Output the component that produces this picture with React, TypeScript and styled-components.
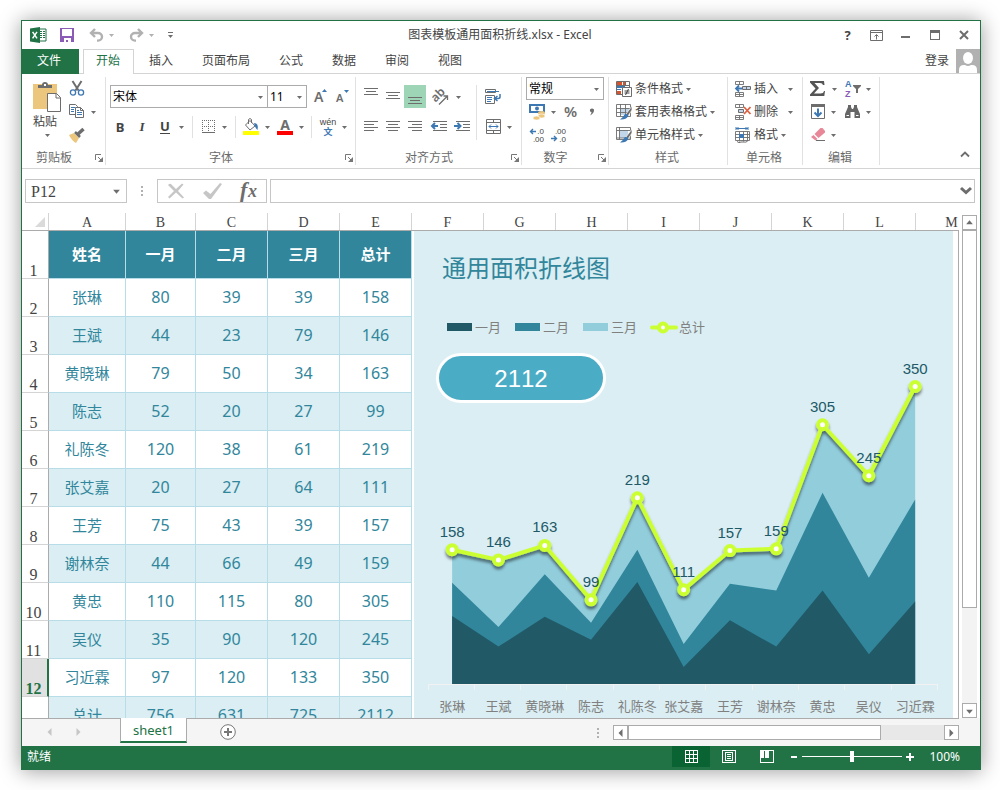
import React from 'react';
import styled, { createGlobalStyle, css } from 'styled-components';

const color = {
  green: '#217346',
  greenDark: '#0a6332',
  text: '#444444',
  muted: '#6a6a6a',
  icon: '#6d6d6d',
  line: '#d4d4d4',
  frame: '#ababab',
  blue: '#3e78b3',
  teal: '#31869b',
  tealDark: '#215967',
  tealLight: '#92cddc',
  tealPale: '#daeef3',
  cellLine: '#b7dee8',
  lime: '#ccff33',
};

const uiFont = '"Noto Sans", "Noto Sans CJK SC", sans-serif';
const cjkFont = '"Noto Sans CJK SC", sans-serif';
const gridFont = '"Liberation Serif", "Noto Sans CJK SC", serif';

const GlobalStyle = createGlobalStyle`
  *, *::before, *::after { box-sizing: border-box; }
  body { margin: 0; background: #fff; color: ${color.text}; font: 12px/16px ${uiFont}; }
  button, input, select { font: inherit; color: inherit; }
  svg { display: block; flex: none; overflow: visible; }
`;

/* ---------- window ---------- */

const Page = styled.div`
  height: 100vh;
  min-height: 400px;
  padding: 20px 19px 20px 21px;
  display: flex;
`;

const AppWindow = styled.main`
  flex: 1;
  min-width: 0;
  display: flex;
  flex-direction: column;
  border: 1px solid ${color.green};
  border-bottom: 0;
  background: #fff;
  box-shadow: 0 1px 20px rgba(0, 0, 0, 0.4);
  overflow: hidden;
`;

const plainButton = css`
  appearance: none;
  border: 0;
  padding: 0;
  background: none;
  cursor: pointer;
`;

/* ---------- title bar ---------- */

const TitleBar = styled.header`
  height: 28px;
  flex: none;
  display: grid;
  grid-template-columns: 1fr auto 1fr;
  align-items: center;
  padding-right: 2px;
`;

const QuickAccess = styled.div`
  display: flex;
  align-items: center;
  padding-left: 8px;
`;

const Title = styled.h1`
  margin: 0;
  font-size: 12px;
  line-height: 16px;
  font-weight: 400;
`;

const WindowControls = styled.div`
  display: flex;
  justify-content: flex-end;
`;

const ToolButton = styled.button<{ $w: number; $on?: boolean }>`
  ${plainButton}
  width: ${(p) => p.$w}px;
  height: 23px;
  flex: none;
  display: flex;
  align-items: center;
  justify-content: center;
  background: ${(p) => (p.$on ? '#9fd5b7' : 'transparent')};
`;

/* ---------- ribbon tabs ---------- */

const TabRow = styled.nav`
  height: 25px;
  flex: none;
  display: flex;
  box-shadow: inset 0 -1px ${color.line};
`;

const Tab = styled.button<{ $active?: boolean }>`
  ${plainButton}
  height: 25px;
  padding: 0 13px 2px 12px;
  margin-right: 2px;
  border: 1px solid transparent;
  border-bottom: 0;
  ${(p) =>
    p.$active &&
    css`
      background: #fff;
      border-color: ${color.line};
      color: ${color.green};
    `}
`;

const FileTab = styled(Tab)`
  padding: 0 17px 2px 14px;
  margin-right: 4px;
  background: ${color.green};
  border-color: ${color.green};
  color: #fff;
`;

const SignIn = styled.button`
  ${plainButton}
  margin-left: auto;
  height: 24px;
  display: flex;
  align-items: center;
  gap: 7px;
`;

/* ---------- ribbon ---------- */

const Ribbon = styled.section`
  flex: none;
  display: flex;
  padding: 3px 0;
  border-bottom: 1px solid ${color.line};
`;

const RibbonGroup = styled.div<{ $w: number }>`
  width: ${(p) => p.$w}px;
  flex: none;
  border-right: 1px solid #e1e1e1;
`;

const GroupBody = styled.div<{ $left?: number; $top?: number; $row?: boolean }>`
  height: 69px;
  display: flex;
  flex-direction: ${(p) => (p.$row ? 'row' : 'column')};
  padding-left: ${(p) => p.$left ?? 4}px;
  padding-top: ${(p) => p.$top ?? 0}px;
`;

const GroupFooter = styled.div<{ $launcher?: boolean }>`
  height: 19px;
  padding: 4px 2px 0 0;
  display: grid;
  grid-template-columns: ${(p) => (p.$launcher ? '1fr 17px' : '1fr')};
  align-items: center;
  justify-items: end;
  color: ${color.muted};
`;

const GroupName = styled.span`
  justify-self: center;
`;

const ToolRow = styled.div<{ $gapTop?: number }>`
  height: 23px;
  margin-top: ${(p) => p.$gapTop ?? 0}px;
  display: flex;
  align-items: center;
`;

const Column = styled.div<{ $left?: number }>`
  display: flex;
  flex-direction: column;
  margin-left: ${(p) => p.$left ?? 0}px;
`;

const PasteButton = styled.button`
  ${plainButton}
  display: flex;
  flex-direction: column;
  align-items: center;
  width: 28px;
  padding-top: 5px;
  gap: 2px;
`;

const PasteText = styled.span`
  display: block;
  white-space: nowrap;
  margin-right: 4px;
`;

const Divider = styled.i<{ $h: number; $x?: number }>`
  width: 1px;
  height: ${(p) => p.$h}px;
  margin: 0 ${(p) => p.$x ?? 0}px;
  background: #e1e1e1;
  flex: none;
`;

const CommandButton = styled.button`
  ${plainButton}
  height: 23px;
  display: flex;
  align-items: center;
  gap: 3px;
  white-space: nowrap;
`;

const CommandText = styled.span<{ $wide?: boolean }>`
  margin-right: ${(p) => (p.$wide ? 7 : 0)}px;
`;

const ComboFrame = styled.label<{ $w: number }>`
  width: ${(p) => p.$w}px;
  height: 23px;
  flex: none;
  display: grid;
  grid-template-columns: 1fr 14px;
  align-items: center;
  border: 1px solid ${color.frame};
  & + & { margin-left: -1px; }
  svg { grid-area: 1 / 2; justify-self: center; pointer-events: none; }
`;

const ComboSelect = styled.select`
  appearance: none;
  grid-area: 1 / 1 / 2 / 3;
  width: 100%;
  height: 21px;
  padding: 0 0 0 2px;
  border: 0;
  background: transparent;
  color: #000;
`;

const Letter = styled.span<{ $kind: 'b' | 'i' | 'u' }>`
  font-size: 13px;
  line-height: 16px;
  font-weight: 700;
  ${(p) => p.$kind === 'i' && 'font-family: "Liberation Serif", serif; font-style: italic;'}
  ${(p) => p.$kind === 'u' && 'border-bottom: 1px solid #444; line-height: 13px;'}
`;

const CollapseArea = styled.div`
  flex: 1;
  display: flex;
  align-items: flex-end;
  justify-content: flex-end;
  padding-bottom: 0;
`;

/* ---------- formula bar ---------- */

const FormulaBar = styled.section`
  flex: none;
  display: flex;
  align-items: center;
  padding: 10px 5px 10px 3px;
`;

const Field = styled.div<{ $w?: number }>`
  ${(p) => (p.$w ? `width: ${p.$w}px; flex: none;` : 'flex: 1; min-width: 0;')}
  height: 24px;
  display: flex;
  align-items: center;
  border: 1px solid #c6c6c6;
`;

const FieldInput = styled.input`
  flex: 1;
  min-width: 0;
  height: 22px;
  padding: 2px 5px 0;
  border: 0;
  outline: 0;
  background: none;
  font-family: ${gridFont};
  font-size: 16px;
`;

const Grip = styled.span<{ $w: number }>`
  width: ${(p) => p.$w}px;
  display: flex;
  justify-content: center;
  align-items: center;
`;

/* ---------- sheet ---------- */

const Workspace = styled.section`
  flex: 1;
  min-height: 0;
  display: flex;
`;

const SheetView = styled.div`
  flex: 1;
  min-width: 0;
  display: flex;
  flex-direction: column;
  overflow: hidden;
`;

const ColumnHeads = styled.div`
  flex: none;
  height: 18px;
  display: flex;
  overflow: hidden;
  border-bottom: 1px solid ${color.frame};
`;

const ColumnHead = styled.div<{ $w: number }>`
  width: ${(p) => p.$w}px;
  flex: none;
  padding-top: 2px;
  border-right: 1px solid ${color.line};
  font: 14px/16px ${gridFont};
  text-align: center;
`;

const Corner = styled(ColumnHead)`
  padding: 4px 3px 0 0;
  display: flex;
  justify-content: flex-end;
`;

const SheetBody = styled.div`
  flex: 1;
  min-height: 0;
  display: flex;
  align-items: flex-start;
  overflow: hidden;
  border-right: 1px solid ${color.frame};
`;

const DataTable = styled.table`
  flex: none;
  width: 390px;
  table-layout: fixed;
  border-collapse: separate;
  border-spacing: 0;
`;

const RowNumber = styled.th<{ $active?: boolean }>`
  padding: 0 3px 0 0;
  vertical-align: bottom;
  text-align: center;
  font: 16px/15px ${gridFont};
  border-bottom: 1px solid ${color.line};
  border-right: 1px solid ${color.frame};
  ${(p) =>
    p.$active &&
    css`
      padding-right: 2px;
      background: #e1e1e1;
      border-right: 2px solid ${color.green};
      color: ${color.green};
      font-weight: 700;
    `}
`;

const HeadCell = styled.th`
  height: 48px;
  padding: 0 0 2px;
  background: ${color.teal};
  border-right: 1px solid ${color.cellLine};
  border-bottom: 1px solid ${color.cellLine};
  color: #fff;
  font: 700 15px/20px ${cjkFont};
`;

const Cell = styled.td<{ $name?: boolean }>`
  height: 38px;
  padding: 0 0 2px;
  text-align: center;
  color: ${color.teal};
  border-right: 1px solid ${color.cellLine};
  border-bottom: 1px solid ${color.cellLine};
  font: ${(p) => (p.$name ? `15px/20px ${cjkFont}` : `16px/20px ${uiFont}`)};
`;

const DataRow = styled.tr<{ $band: boolean }>`
  ${Cell} { background: ${(p) => (p.$band ? color.tealPale : '#fff')}; }
`;

/* ---------- chart ---------- */

const Chart = styled.figure`
  flex: 1;
  min-width: 0;
  margin: 0 5px 0 2px;
  padding-top: 20px;
  background: ${color.tealPale};
`;

const ChartTitle = styled.figcaption`
  padding-left: 28px;
  color: ${color.teal};
  font: 24px/32px ${cjkFont};
`;

const Legend = styled.ul`
  margin: 34px 0 0;
  padding: 0 0 0 33px;
  list-style: none;
  display: flex;
  gap: 14px;
`;

const LegendItem = styled.li`
  display: flex;
  align-items: center;
  gap: 3px;
  color: #808080;
  font: 13px/20px ${cjkFont};
`;

const Swatch = styled.i<{ $fill: string }>`
  width: 25px;
  height: 8px;
  background: ${(p) => p.$fill};
`;

const Plot = styled.div`
  position: relative;
`;

const TotalPill = styled.output`
  position: absolute;
  left: 22px;
  top: 16px;
  width: 170px;
  height: 50px;
  border: 3px solid #fff;
  border-radius: 25px;
  background: #4bacc6;
  color: #fff;
  text-align: center;
  font: 24px/46px "Liberation Sans", sans-serif;
  font-kerning: none;
`;

/* ---------- scroll bars ---------- */

const VerticalScroll = styled.div`
  width: 21px;
  flex: none;
  display: flex;
  flex-direction: column;
  padding: 2px 3px 0;
`;

const ScrollTrack = styled.div<{ $vertical?: boolean }>`
  flex: 1;
  min-height: 0;
  display: flex;
  flex-direction: ${(p) => (p.$vertical ? 'column' : 'row')};
  background: ${(p) => (p.$vertical ? '#f3f3f3' : '#e8e8e8')};
`;

const ScrollThumb = styled.div<{ $vertical?: boolean }>`
  flex: 0 0 80%;
  background: #fff;
  border: 1px solid ${color.frame};
`;

const ScrollButton = styled.button`
  ${plainButton}
  width: 15px;
  height: 15px;
  flex: none;
  display: flex;
  align-items: center;
  justify-content: center;
  border: 1px solid ${color.frame};
  background: #fff;
`;

/* ---------- sheet tabs and status bar ---------- */

const SheetBar = styled.section`
  flex: none;
  height: 28px;
  display: flex;
  background: #f5f5f5;
  padding-right: 21px;
`;

const SheetBarMain = styled.div`
  flex: 1;
  min-width: 0;
  display: flex;
  padding-left: 13px;
  border-top: 1px solid ${color.frame};
`;

const SheetBarButton = styled.button<{ $w: number }>`
  ${plainButton}
  width: ${(p) => p.$w}px;
  height: 26px;
  display: flex;
  align-items: center;
  justify-content: center;
`;

const SheetTab = styled.button`
  ${plainButton}
  height: 25px;
  margin: -1px 0 0 13px;
  padding: 0 12px;
  background: #fff;
  border: 1px solid ${color.frame};
  border-top: 0;
  border-bottom: 2px solid ${color.green};
  color: ${color.green};
  font-size: 13px;
  line-height: 20px;
`;

const HorizontalScroll = styled.div`
  flex: 0 0 362px;
  height: 15px;
  margin: 6px 0 0 auto;
  display: flex;
`;

const StatusBar = styled.footer`
  flex: none;
  height: 24px;
  display: flex;
  align-items: center;
  padding: 0 20px 3px 5px;
  background: ${color.green};
  color: #fff;
`;

const ViewButtons = styled.div`
  display: flex;
  margin-left: auto;
`;

const ViewButton = styled.button<{ $active?: boolean }>`
  ${plainButton}
  width: 38px;
  height: 21px;
  display: flex;
  align-items: center;
  justify-content: center;
  background: ${(p) => (p.$active ? color.greenDark : 'transparent')};
`;

const ZoomBox = styled.div`
  display: flex;
  align-items: center;
  gap: 4px;
  margin: 0 15px 0 4px;
`;

const ZoomRange = styled.input`
  appearance: none;
  width: 100px;
  height: 12px;
  margin: 0;
  background: linear-gradient(#fff, #fff) center / 100% 1px no-repeat;
  &::-webkit-slider-thumb {
    appearance: none;
    width: 4px;
    height: 11px;
    background: #fff;
  }
`;

/* ---------- icons ---------- */

type Direction = 'down' | 'up' | 'left' | 'right';

const arrowPoints: Record<Direction, string> = {
  down: '0,2 5,2 2.5,5',
  up: '0,4 5,4 2.5,1',
  left: '4,0 4,6 1,3',
  right: '1,0 1,6 4,3',
};

const Arrow = ({ dir = 'down', fill = color.icon, size = 5 }: { dir?: Direction; fill?: string; size?: number }) => (
  <svg width={size} height={size + 1} viewBox="0 0 5 6" aria-hidden="true">
    <polygon points={arrowPoints[dir]} fill={fill} />
  </svg>
);

type IconProps = { w?: number; h?: number; crisp?: boolean; children: React.ReactNode };

const Icon = ({ w = 16, h = 16, crisp, children }: IconProps) => (
  <svg
    width={w}
    height={h}
    viewBox={`0 0 ${w} ${h}`}
    fill="none"
    shapeRendering={crisp ? 'crispEdges' : undefined}
    aria-hidden="true"
  >
    {children}
  </svg>
);

const ExcelLogo = () => (
  <Icon>
    <path d="M8 2h8v12H8z" fill="#fff" stroke={color.green} />
    <path d="M10 4h2v1h-2zm3 0h2v1h-2zm-3 2h2v1h-2zm3 0h2v1h-2zm-3 2h2v1h-2zm3 0h2v1h-2zm-3 2h2v1h-2zm3 0h2v1h-2z" fill={color.green} />
    <path d="M0 1.5 10 0v16L0 14.5z" fill={color.green} />
    <path d="M2.6 4.8 7 11.4M7 4.8 2.6 11.4" stroke="#fff" strokeWidth="1.5" />
  </Icon>
);

const SaveIcon = () => (
  <Icon w={14} h={14} crisp>
    <path d="M0 0h14v14H0z" fill="#8b5bb5" />
    <path d="M2 1h10v7H2zM4 10h7v4H8v-2H6v2H4z" fill="#fff" />
  </Icon>
);

const UndoIcon = () => (
  <Icon w={15} h={14}>
    <path d="M6 1 2 5l4 4M2.5 5H9a4 3.8 0 0 1 0 7.6H8" stroke="#b1b1b1" strokeWidth="2.4" />
  </Icon>
);

const RedoIcon = () => (
  <Icon w={15} h={14}>
    <path d="m9 1 4 4-4 4M12.500 5H6a4 3.800 0 0 0 0 7.600h1" stroke="#b1b1b1" strokeWidth="2.4" />
  </Icon>
);

const CustomizeIcon = () => (
  <Icon w={5} h={6}>
    <path d="M0 .5h5" stroke={color.icon} />
    <path d="M0 3h5L2.500 6z" fill={color.icon} />
  </Icon>
);

const RibbonDisplayIcon = () => (
  <Icon w={13} h={11}>
    <path d="M.5.5h12v10H.5zM1 2.500h11" stroke={color.icon} />
    <path d="M6.500 9.500V5M4.500 6.500l2-2 2 2" stroke={color.icon} />
  </Icon>
);

const MaximizeIcon = () => (
  <Icon w={10} h={10} crisp>
    <path d="M0 0h10v10H0z" fill={color.icon} />
    <path d="M1 3h8v6H1z" fill="#fff" />
  </Icon>
);

const CloseIcon = () => (
  <Icon w={10} h={10}>
    <path d="m1 1 8 8M9 1 1 9" stroke={color.icon} strokeWidth="2" />
  </Icon>
);

const AvatarIcon = () => (
  <Icon w={24} h={24}>
    <path d="M0 0h24v24H0z" fill="#b1b1b1" />
    <ellipse cx="12" cy="9" rx="5" ry="6" fill="#fff" />
    <path d="M3 24v-3q0-5 5-5h1q3 2 6 0h1q5 0 5 5v3z" fill="#fff" />
  </Icon>
);

const PasteIcon = () => (
  <Icon w={28} h={30}>
    <path d="M0 2h24v25H0z" fill="#ecc67d" />
    <path d="M5 6V3h4q0-3 3-3t3 3h4v3z" fill={color.icon} />
    <path d="M11 2h2v2h-2z" fill="#fff" />
    <path d="M14.500 11.500h9l4 4v14h-13z" fill="#fff" stroke={color.icon} />
    <path d="M23 11.500v4.500h4.500" stroke={color.icon} />
  </Icon>
);

const CutIcon = () => (
  <Icon>
    <path d="m3.500 0 6 9.500M12.500 0l-6 9.500" stroke={color.icon} strokeWidth="2" />
    <circle cx="4" cy="11.500" r="2.600" stroke={color.blue} strokeWidth="1.300" />
    <circle cx="12" cy="11.500" r="2.600" stroke={color.blue} strokeWidth="1.300" />
  </Icon>
);

const CopyIcon = () => (
  <Icon>
    <path d="M.5.5h6l2 2v8h-8z" fill="#fff" stroke={color.icon} />
    <path d="M2 3.500h4M2 5.500h3M2 7.500h3" stroke={color.blue} />
    <path d="M6.500 3.500h5l3 3v7h-8z" fill="#fff" stroke={color.icon} />
    <path d="M11.500 3.500v3h3" stroke={color.icon} />
    <path d="M8 8.500h5M8 10.500h5M8 6.500h2" stroke={color.blue} />
  </Icon>
);

const BrushIcon = () => (
  <Icon>
    <path d="M0 8 5 6l5 5-3 5q-4-2-7-8z" fill="#ecc67d" />
    <path d="m6 5 5 5" stroke={color.icon} strokeWidth="2.500" />
    <path d="m9 7 5.500-5" stroke={color.icon} strokeWidth="3.500" />
  </Icon>
);

const LauncherIcon = () => (
  <Icon w={8} h={8}>
    <path d="M.5 6V.5H6" stroke="#777" />
    <path d="m3 3 3 3" stroke="#777" />
    <path d="M8 3v5H3z" fill="#777" />
  </Icon>
);

const GrowFontIcon = ({ shrink }: { shrink?: boolean }) => (
  <Icon w={15} h={17}>
    <text x="1" y="14" fontFamily="Noto Sans, sans-serif" fontWeight="600" fontSize={shrink ? 11 : 14} fill={color.icon}>A</text>
    <path d={shrink ? 'M9 2h5l-2.500 3z' : 'M9 4h5L11.500 1z'} fill={color.blue} />
  </Icon>
);

const BorderIcon = () => (
  <Icon w={13} h={13} crisp>
    <path d="M.5 0v12M6.500 0v12M12.500 0v12M0 .5h13M0 6.500h13" stroke={color.icon} strokeDasharray="1 1" />
    <path d="M0 12.500h13" stroke={color.icon} />
  </Icon>
);

const FillIcon = () => (
  <Icon w={16} h={17}>
    <path d="M7 2.500 12 8l-5 4-4.500-5z" fill="#fff" stroke={color.icon} />
    <path d="M5.500 6V1.500q1.500-2 3 0V5" stroke={color.icon} />
    <path d="M11 5q5 0 3.500 7Q12 10 11 5z" fill={color.blue} />
    <path d="M0 13h16v4H0z" fill="#ffff00" />
  </Icon>
);

const FontColorIcon = () => (
  <Icon w={16} h={17}>
    <text x="8" y="12" textAnchor="middle" fontFamily="Noto Sans, sans-serif" fontWeight="700" fontSize="14" fill={color.icon}>A</text>
    <path d="M0 13h16v4H0z" fill="#ff0000" />
  </Icon>
);

const PhoneticIcon = () => (
  <Icon w={18} h={18}>
    <text x="9" y="7" textAnchor="middle" fontFamily="Liberation Sans, sans-serif" fontSize="9" fill={color.text}>wén</text>
    <text x="9" y="17" textAnchor="middle" fontFamily="Noto Sans CJK SC, sans-serif" fontWeight="700" fontSize="9" fill={color.blue}>文</text>
  </Icon>
);

/* Four text lines; a short line is shifted towards the chosen side. */
const AlignIcon = ({ side }: { side: 'left' | 'center' | 'right' }) => {
  const start = { left: 0, center: 2, right: 4 }[side];
  return (
    <Icon w={14} h={11} crisp>
      <path d={`M0 .5h14M${start} 3.500h10M0 6.500h14M${start} 9.500h10`} stroke={color.icon} />
    </Icon>
  );
};

const VAlignIcon = ({ shift }: { shift: number }) => (
  <Icon w={14} h={23} crisp>
    <path d={`M0 ${shift + 0.5}h14M2 ${shift + 3.5}h10M0 ${shift + 6.5}h14`} stroke={color.icon} />
  </Icon>
);

const OrientationIcon = () => (
  <Icon w={17} h={16}>
    <text x="0" y="11" transform="rotate(-45 5 8)" fontFamily="Noto Sans, sans-serif" fontWeight="600" fontSize="12" fill={color.icon}>ab</text>
    <path d="M7 15.500 15.500 7M11.500 7h4v4" stroke={color.icon} strokeWidth="1.300" />
  </Icon>
);

const IndentIcon = ({ more }: { more?: boolean }) => (
  <Icon w={17} h={11}>
    <path d="M2 .5h14M9 3.500h7M9 6.500h7M2 9.500h14" stroke={color.icon} shapeRendering="crispEdges" />
    {more ? (
      <path d="M0 5h5M3.500 2 6.500 5l-3 3" stroke={color.blue} strokeWidth="2" />
    ) : (
      <path d="M7 5H2M4 2 1 5l3 3" stroke={color.blue} strokeWidth="2" />
    )}
  </Icon>
);

const WrapIcon = () => (
  <Icon>
    <path d="M.5.5h10v3H.5zM.5 6.500h9v8H.5z" stroke={color.icon} />
    <path d="M2 2.500h12M2 8.500h5M2 10.500h5M2 12.500h4" stroke={color.blue} />
    <path d="M15 5v3q0 1.500-2 1.500h-3M12.500 7l-3 2.500 3 2.500" stroke={color.blue} strokeWidth="1.500" />
  </Icon>
);

const MergeIcon = () => (
  <Icon w={15} h={15}>
    <path d="M.5.5h14v14H.5zM.5 3.500h14M.5 11.500h14M7.500 0v3.500M7.500 11.500V15" stroke={color.icon} />
    <path d="M3 7.500h9M5 5.500l-2 2 2 2M10 5.500l2 2-2 2" stroke={color.blue} />
  </Icon>
);

const CurrencyIcon = () => (
  <Icon>
    <path d="M1 1h14v7H1z" fill="#fff" stroke={color.blue} strokeWidth="2" />
    <circle cx="8" cy="4.500" r="2" fill={color.blue} />
    <ellipse cx="12.500" cy="9" rx="3.500" ry="2" fill="#ecc67d" />
    <ellipse cx="12.500" cy="12" rx="3.500" ry="2" fill="#ecc67d" stroke="#fff" strokeWidth=".6" />
    <ellipse cx="7.500" cy="14" rx="3.500" ry="2" fill="#ecc67d" stroke="#fff" strokeWidth=".6" />
  </Icon>
);

const PercentIcon = () => (
  <Icon w={14} h={14}>
    <text x="0" y="12" fontFamily="Noto Sans, sans-serif" fontWeight="600" fontSize="15" fill={color.icon}>%</text>
  </Icon>
);

const CommaIcon = () => (
  <Icon w={6} h={8}>
    <path d="M1 1.500Q3-.5 5 1.500q.5 3.500-4 6 1.500-2 1.500-3.500Q.5 4 1 1.500z" fill={color.icon} />
  </Icon>
);

const DecimalIcon = ({ less }: { less?: boolean }) => (
  <Icon w={16} h={16}>
    <text x="15" y="7" textAnchor="end" fontFamily="Liberation Sans, sans-serif" fontSize="8" fill={color.text}>{less ? '.00' : '.0'}</text>
    <text x="15" y="15" textAnchor="end" fontFamily="Liberation Sans, sans-serif" fontSize="8" fill={color.text}>{less ? '.0' : '.00'}</text>
    {less ? (
      <path d="M0 11.500h5M3 9l2.500 2.500L3 14" stroke={color.blue} strokeWidth="1.400" />
    ) : (
      <path d="M7 4.500H1.500M4 2 1.500 4.500 4 7" stroke={color.blue} strokeWidth="1.400" />
    )}
  </Icon>
);

const ConditionalIcon = () => (
  <Icon>
    <path d="M.5.5h13v13H.5z" fill="#fff" stroke={color.icon} />
    <path d="M1 1h5v3H1zM1 10h4v3H1z" fill="#d6532d" />
    <path d="M1 5h8v2H1zM1 8h4v1H1z" fill={color.blue} />
    <path d="M7 1h2v3H7z" fill="#d6532d" />
    <path d="M9.500 1v4M0 4.500h13" stroke={color.icon} />
    <path d="M6.500 6.500h9v9h-9z" fill="#fff" stroke={color.icon} />
    <path d="M8.500 10h5M8.500 12h5M12.500 8l-3 6" stroke={color.text} />
  </Icon>
);

const TableStyleIcon = ({ solid }: { solid?: boolean }) => (
  <Icon>
    {solid ? <path d="M4 3h8v8H4z" fill="#c3d5e8" /> : <path d="M4 4h9v7H4z" fill="#c3d5e8" />}
    <path d={solid ? 'M.5.5h14v12H.5zM.5 3.500h14M3.500 0v12.500M.5 11h14' : 'M.5.5h14v12H.5zM.5 4.500h14M.5 8.500h14M4.500 0v12.500M9.500 0v12.500'} stroke={color.icon} strokeWidth=".9" />
    <path d="M16 2 10 10l2 2 4-6z" fill={color.icon} stroke="#fff" strokeWidth=".7" />
    <path d="M9 10q4-.5 3 2.500-2 3.500-8 3 3-2 5-5.500z" fill={color.blue} />
  </Icon>
);

const CellsIcon = ({ kind }: { kind: 'insert' | 'delete' }) => (
  <Icon>
    <path d="M.5.5h8v3h-8zM4.500.5v3M.5 11.500h8v4h-8zM4.500 11.500v4M.5 13.500h8" stroke={color.icon} strokeWidth=".9" />
    {kind === 'insert' ? (
      <>
        <path d="M7.500 5.500h8v3h-8zM11.500 5.500v3" fill="#c3d5e8" stroke={color.icon} />
        <path d="M7 7.500H1.500M4 4.500l-3 3 3 3" stroke={color.blue} strokeWidth="1.800" />
      </>
    ) : (
      <>
        <path d="M3.500 5.500h5v3h-5z" fill="#c3d5e8" stroke={color.icon} />
        <path d="m9 3 6.500 7M15.500 3 9 10" stroke="#dc6141" strokeWidth="1.800" />
      </>
    )}
  </Icon>
);

const FormatIcon = () => (
  <Icon>
    <path d="M1 1.500h12M1 0v3M13 0v3M3 0v3M11 0v3" stroke={color.blue} />
    <path d="M.5 4.500h14v9H.5zM.5 7.500h14M.5 10.500h14M4.500 4.500v10M8.500 4.500v10M12.500 4.500v10" stroke={color.icon} strokeWidth=".9" />
    <path d="M4 7h5v4H4z" fill={color.blue} />
    <path d="M2 14.500q2 2 4 .5h3q2 .5 3-.5" stroke={color.icon} />
  </Icon>
);

const SumIcon = () => (
  <Icon w={16} h={15}>
    <path d="M0 0h14l.5 4H13q-.5-2-3-2H4.500L9 7l-5 5.500h6.500q3 0 3.500-2.500h1l-.7 5H0v-1.500L5.500 7.500 0 1.500z" fill="#555" />
  </Icon>
);

const SortFilterIcon = () => (
  <Icon w={16} h={17}>
    <text x="0" y="7" fontFamily="Liberation Sans, sans-serif" fontWeight="700" fontSize="9" fill={color.blue}>A</text>
    <text x="0" y="17" fontFamily="Liberation Sans, sans-serif" fontWeight="700" fontSize="9" fill="#8b5bb5">Z</text>
    <path d="M8 5h8v1l-3 3v4h-2V9L8 6z" fill={color.icon} />
  </Icon>
);

const FillDownIcon = () => (
  <Icon w={14} h={15}>
    <path d="M.5.5h13v14H.5z" fill="#fff" stroke={color.icon} />
    <path d="M0 0h14v3H0z" fill={color.icon} />
    <path d="M7 4.500V12M3.500 8.500 7 12l3.500-3.500" stroke={color.blue} strokeWidth="2" />
  </Icon>
);

const FindIcon = () => (
  <Icon w={15} h={13}>
    <path d="M3 0h3v2l1 2h1l1-2V0h3v2l3 7v4h-5.500V7h-4v6H0V9l3-7z" fill="#666" />
    <path d="M1.500 10.500h2.500M11 10.500h2.500" stroke="#fff" />
  </Icon>
);

const ClearIcon = () => (
  <Icon w={15} h={13}>
    <path d="m3.500 6 6-6h2L14 3v1.500L7.500 10z" fill="#e88798" />
    <path d="m2.500 7 4 4-2 1.500L0 9z" fill="#e88798" />
    <path d="M5 12.500h9" stroke={color.icon} />
  </Icon>
);

const CollapseIcon = () => (
  <Icon w={10} h={6}>
    <path d="m1 5.500 4-4 4 4" stroke={color.icon} strokeWidth="1.800" />
  </Icon>
);

const DotsIcon = () => (
  <Icon w={2} h={10} crisp>
    <path d="M0 0h2v2H0zM0 4h2v2H0zM0 8h2v2H0z" fill="#b1b1b1" />
  </Icon>
);

const CancelIcon = () => (
  <Icon w={18} h={16}>
    <path d="M1 2q2-2 3-1l5 5 6-5.500 1.500 1L11 8l6 6.500-1.500 1L9 9.500l-6.500 6L1 14l6-6z" fill="#c6c6c6" />
  </Icon>
);

const EnterIcon = () => (
  <Icon w={19} h={16}>
    <path d="m0 10 3-2.500L7.500 11 17 0l2 1L8 16H6z" fill="#c6c6c6" />
  </Icon>
);

const FxIcon = () => (
  <Icon w={22} h={22}>
    <text x="3" y="17" fontFamily="Liberation Serif, serif" fontStyle="italic" fontWeight="700" fontSize="22" fill={color.icon}>f</text>
    <text x="11" y="17" fontFamily="Liberation Serif, serif" fontStyle="italic" fontWeight="700" fontSize="18" fill={color.icon}>x</text>
  </Icon>
);

const ExpandIcon = () => (
  <Icon w={12} h={8}>
    <path d="m1 1 5 4.500L11 1" stroke={color.icon} strokeWidth="3" />
  </Icon>
);

const SelectAllIcon = () => (
  <Icon w={10} h={10}>
    <path d="M10 0v10H0z" fill="#dadada" />
  </Icon>
);

const AddSheetIcon = () => (
  <Icon w={16} h={16}>
    <circle cx="8" cy="8" r="7.300" fill="#fff" stroke="#777" />
    <path d="M8 4v8M4 8h8" stroke="#777" strokeWidth="2" />
  </Icon>
);

const NormalViewIcon = () => (
  <Icon w={13} h={13} crisp>
    <path d="M.5.5h12v12H.5zM4.500 0v13M8.500 0v13M0 4.500h13M0 8.500h13" stroke="#fff" />
  </Icon>
);

const LayoutViewIcon = () => (
  <Icon w={14} h={13} crisp>
    <path d="M.5.5h13v12H.5zM3.500 2.500h7v8h-7zM5 4.500h4M5 6.500h4M5 8.500h4" stroke="#fff" />
  </Icon>
);

const BreakViewIcon = () => (
  <Icon w={14} h={13} crisp>
    <path d="M.5.5h13v12H.5z" stroke="#fff" />
    <path d="M1 1h3v7H1zM5 1h4v7H5z" fill="#fff" />
  </Icon>
);

const SignIcon = ({ plus }: { plus?: boolean }) => (
  <Icon w={8} h={8} crisp>
    <path d={plus ? 'M0 3h8v2H0zM3 0h2v8H3z' : 'M1 3h6v2H1z'} fill="#fff" />
  </Icon>
);

/* ---------- data ---------- */

const headings = ['姓名', '一月', '二月', '三月', '总计'];

const people: [string, number, number, number][] = [
  ['张琳', 80, 39, 39],
  ['王斌', 44, 23, 79],
  ['黄晓琳', 79, 50, 34],
  ['陈志', 52, 20, 27],
  ['礼陈冬', 120, 38, 61],
  ['张艾嘉', 20, 27, 64],
  ['王芳', 75, 43, 39],
  ['谢林奈', 44, 66, 49],
  ['黄忠', 110, 115, 80],
  ['吴仪', 35, 90, 120],
  ['习近霖', 97, 120, 133],
];

const tableRows: (string | number)[][] = [
  ...people.map(([name, a, b, c]) => [name, a, b, c, a + b + c]),
  ['总计', 756, 631, 725, 2112],
];

const columns = [
  { name: 'A', w: 77 },
  { name: 'B', w: 70 },
  ...'CDEFGHIJKLM'.split('').map((name) => ({ name, w: 72 })),
];

const tabs = ['开始', '插入', '页面布局', '公式', '数据', '审阅', '视图'];

/* ---------- parts ---------- */

const Group = ({ name, w, launcher, children }: { name: string; w: number; launcher?: boolean; children: React.ReactNode }) => (
  <RibbonGroup $w={w}>
    {children}
    <GroupFooter $launcher={launcher}>
      <GroupName>{name}</GroupName>
      {launcher && <LauncherIcon />}
    </GroupFooter>
  </RibbonGroup>
);

const Combo = ({ label, value, w }: { label: string; value: string; w: number }) => (
  <ComboFrame $w={w}>
    <ComboSelect aria-label={label} defaultValue={value}>
      <option>{value}</option>
    </ComboSelect>
    <Arrow />
  </ComboFrame>
);

const Tool = ({ label, w, on, children }: { label: string; w: number; on?: boolean; children: React.ReactNode }) => (
  <ToolButton type="button" aria-label={label} title={label} $w={w} $on={on}>
    {children}
  </ToolButton>
);

const More = ({ w = 9 }: { w?: number }) => (
  <Tool label="更多" w={w}>
    <Arrow />
  </Tool>
);

const Command = ({ icon, text, wide }: { icon: React.ReactNode; text: string; wide?: boolean }) => (
  <CommandButton type="button">
    {icon}
    <CommandText $wide={wide}>{text}</CommandText>
    <Arrow />
  </CommandButton>
);

const plot = { left: 15, step: 46.3, base: 347, scale: 0.85, width: 539, height: 391 };

const AreaLineChart = () => {
  const x = (i: number) => plot.left + plot.step * (i + 0.5);
  const y = (v: number) => plot.base - v * plot.scale;
  const line = (values: number[]) => values.map((v, i) => `${x(i)},${y(v)}`).join(' ');
  const area = (values: number[]) => `${x(0)},${plot.base} ${line(values)} ${x(values.length - 1)},${plot.base}`;
  const first = people.map((p) => p[1]);
  const second = people.map((p) => p[1] + p[2]);
  const total = people.map((p) => p[1] + p[2] + p[3]);
  const end = plot.left + plot.step * people.length;

  return (
    <svg width={plot.width} height={plot.height} viewBox={`0 0 ${plot.width} ${plot.height}`} role="img" aria-label="通用面积折线图">
      <defs>
        <filter id="lineShadow" x="-10%" y="-10%" width="120%" height="120%">
          <feDropShadow dx="0" dy="3" stdDeviation="1.5" floodOpacity="0.5" />
        </filter>
      </defs>
      <polygon points={area(total)} fill={color.tealLight} />
      <polygon points={area(second)} fill={color.teal} />
      <polygon points={area(first)} fill={color.tealDark} />
      <path
        d={`M${plot.left} ${plot.base + 0.5}H${end}` + Array.from({ length: people.length + 1 }, (_, i) => `M${Math.floor(plot.left + i * plot.step) - 0.5} ${plot.base}v6`).join('')}
        stroke="#f2f2f2"
      />
      <g filter="url(#lineShadow)">
        <polyline points={line(total)} fill="none" stroke={color.lime} strokeWidth="4" strokeLinejoin="round" />
        {total.map((v, i) => (
          <circle key={i} cx={x(i)} cy={y(v)} r="4.5" fill="#fff" stroke={color.lime} strokeWidth="4" />
        ))}
      </g>
      {total.map((v, i) => (
        <text key={i} x={x(i)} y={y(v) - 13} textAnchor="middle" fontFamily="Liberation Sans, sans-serif" fontSize="15" fill={color.tealDark}>
          {v}
        </text>
      ))}
      {people.map(([name], i) => (
        <text key={name} x={x(i)} y={plot.base + 27} textAnchor="middle" fontFamily="Noto Sans CJK SC, sans-serif" fontSize="13" fill="#808080">
          {name}
        </text>
      ))}
    </svg>
  );
};

const RibbonPanel = () => (
  <Ribbon>
    <Group name="剪贴板" w={84} launcher>
      <GroupBody $row $left={11}>
        <PasteButton type="button">
          <PasteIcon />
          <PasteText>粘贴</PasteText>
          <Arrow />
        </PasteButton>
        <Column $left={8}>
          <ToolRow><Tool label="剪切" w={16}><CutIcon /></Tool></ToolRow>
          <ToolRow><Tool label="复制" w={16}><CopyIcon /></Tool><More w={16} /></ToolRow>
          <ToolRow><Tool label="格式刷" w={16}><BrushIcon /></Tool></ToolRow>
        </Column>
      </GroupBody>
    </Group>

    <Group name="字体" w={250} launcher>
      <GroupBody $top={8}>
        <ToolRow>
          <Combo label="字体" value="宋体" w={158} />
          <Combo label="字号" value="11" w={40} />
          <Tool label="增大字号" w={26}><GrowFontIcon /></Tool>
          <Tool label="减小字号" w={18}><GrowFontIcon shrink /></Tool>
        </ToolRow>
        <ToolRow $gapTop={7}>
          <Tool label="加粗" w={20}><Letter $kind="b">B</Letter></Tool>
          <Tool label="倾斜" w={24}><Letter $kind="i">I</Letter></Tool>
          <Tool label="下划线" w={22}><Letter $kind="u">U</Letter></Tool>
          <More w={11} />
          <Divider $h={22} $x={5} />
          <Tool label="边框" w={20}><BorderIcon /></Tool>
          <More w={12} />
          <Divider $h={22} $x={5} />
          <Tool label="填充颜色" w={20}><FillIcon /></Tool>
          <More w={12} />
          <Tool label="字体颜色" w={24}><FontColorIcon /></Tool>
          <More w={9} />
          <Divider $h={22} $x={5} />
          <Tool label="拼音指南" w={22}><PhoneticIcon /></Tool>
          <More w={10} />
        </ToolRow>
      </GroupBody>
    </Group>

    <Group name="对齐方式" w={166} launcher>
      <GroupBody $row $top={8}>
        <Column>
          <ToolRow>
            <Tool label="顶端对齐" w={22}><VAlignIcon shift={3} /></Tool>
            <Tool label="垂直居中" w={22}><VAlignIcon shift={7} /></Tool>
            <Tool label="底端对齐" w={22} on><VAlignIcon shift={12} /></Tool>
            <Tool label="方向" w={28}><OrientationIcon /></Tool>
            <More w={8} />
          </ToolRow>
          <ToolRow $gapTop={7}>
            <Tool label="左对齐" w={22}><AlignIcon side="left" /></Tool>
            <Tool label="居中" w={22}><AlignIcon side="center" /></Tool>
            <Tool label="右对齐" w={22}><AlignIcon side="right" /></Tool>
            <Tool label="减少缩进" w={26}><IndentIcon /></Tool>
            <Tool label="增加缩进" w={20}><IndentIcon more /></Tool>
          </ToolRow>
        </Column>
        <Divider $h={55} $x={4} />
        <Column $left={4}>
          <ToolRow><Tool label="自动换行" w={16}><WrapIcon /></Tool></ToolRow>
          <ToolRow $gapTop={7}><Tool label="合并后居中" w={16}><MergeIcon /></Tool><More w={16} /></ToolRow>
        </Column>
      </GroupBody>
    </Group>

    <Group name="数字" w={87} launcher>
      <GroupBody>
        <ToolRow><Combo label="数字格式" value="常规" w={78} /></ToolRow>
        <ToolRow>
          <Tool label="会计数字格式" w={22}><CurrencyIcon /></Tool>
          <More w={10} />
          <Tool label="百分比样式" w={26}><PercentIcon /></Tool>
          <Tool label="千位分隔样式" w={16}><CommaIcon /></Tool>
        </ToolRow>
        <ToolRow>
          <Tool label="增加小数位数" w={21}><DecimalIcon /></Tool>
          <Tool label="减少小数位数" w={24}><DecimalIcon less /></Tool>
        </ToolRow>
      </GroupBody>
    </Group>

    <Group name="样式" w={119}>
      <GroupBody $left={7}>
        <Command icon={<ConditionalIcon />} text="条件格式" />
        <Command icon={<TableStyleIcon />} text="套用表格格式" />
        <Command icon={<TableStyleIcon solid />} text="单元格样式" />
      </GroupBody>
    </Group>

    <Group name="单元格" w={75}>
      <GroupBody $left={7}>
        <Command icon={<CellsIcon kind="insert" />} text="插入" wide />
        <Command icon={<CellsIcon kind="delete" />} text="删除" wide />
        <Command icon={<FormatIcon />} text="格式" />
      </GroupBody>
    </Group>

    <Group name="编辑" w={77}>
      <GroupBody $left={7}>
        <ToolRow>
          <Tool label="自动求和" w={16}><SumIcon /></Tool>
          <More w={16} />
          <Tool label="排序和筛选" w={22}><SortFilterIcon /></Tool>
          <More w={8} />
        </ToolRow>
        <ToolRow>
          <Tool label="填充" w={16}><FillDownIcon /></Tool>
          <More w={14} />
          <Tool label="查找和选择" w={24}><FindIcon /></Tool>
          <More w={8} />
        </ToolRow>
        <ToolRow>
          <Tool label="清除" w={16}><ClearIcon /></Tool>
          <More w={14} />
        </ToolRow>
      </GroupBody>
    </Group>

    <CollapseArea>
      <Tool label="折叠功能区" w={30}><CollapseIcon /></Tool>
    </CollapseArea>
  </Ribbon>
);

export default function App() {
  return (
    <Page>
      <GlobalStyle />
      <AppWindow>
        <TitleBar>
          <QuickAccess>
            <ExcelLogo />
            <Tool label="保存" w={42}><SaveIcon /></Tool>
            <Tool label="撤消" w={16}><UndoIcon /></Tool>
            <Tool label="撤消列表" w={14}><Arrow fill="#b1b1b1" /></Tool>
            <Grip $w={9} />
            <Tool label="恢复" w={18}><RedoIcon /></Tool>
            <Tool label="恢复列表" w={12}><Arrow fill="#b1b1b1" /></Tool>
            <Tool label="自定义快速访问工具栏" w={26}><CustomizeIcon /></Tool>
          </QuickAccess>
          <Title>图表模板通用面积折线.xlsx - Excel</Title>
          <WindowControls>
            <Tool label="帮助" w={29}><Letter $kind="b">?</Letter></Tool>
            <Tool label="功能区显示选项" w={29}><RibbonDisplayIcon /></Tool>
            <Tool label="最小化" w={29}>
              <Icon w={9} h={6} crisp><path d="M0 4h9v2H0z" fill={color.icon} /></Icon>
            </Tool>
            <Tool label="最大化" w={29}><MaximizeIcon /></Tool>
            <Tool label="关闭" w={29}><CloseIcon /></Tool>
          </WindowControls>
        </TitleBar>

        <TabRow>
          <FileTab type="button">文件</FileTab>
          {tabs.map((name, i) => (
            <Tab key={name} type="button" $active={i === 0}>{name}</Tab>
          ))}
          <SignIn type="button">
            登录
            <AvatarIcon />
          </SignIn>
        </TabRow>

        <RibbonPanel />

        <FormulaBar>
          <Field $w={102}>
            <FieldInput aria-label="名称框" defaultValue="P12" />
            <Tool label="名称列表" w={20}><Arrow size={7} /></Tool>
          </Field>
          <Grip $w={30}><DotsIcon /></Grip>
          <Field $w={110}>
            <Tool label="取消" w={36}><CancelIcon /></Tool>
            <Tool label="输入" w={36}><EnterIcon /></Tool>
            <Tool label="插入函数" w={36}><FxIcon /></Tool>
          </Field>
          <Grip $w={3} />
          <Field>
            <FieldInput aria-label="编辑栏" defaultValue="" />
            <Tool label="展开编辑栏" w={16}><ExpandIcon /></Tool>
          </Field>
        </FormulaBar>

        <Workspace>
          <SheetView>
            <ColumnHeads>
              <Corner $w={27}><SelectAllIcon /></Corner>
              {columns.map((c) => (
                <ColumnHead key={c.name} $w={c.w}>{c.name}</ColumnHead>
              ))}
            </ColumnHeads>
            <SheetBody>
              <DataTable>
                <colgroup>
                  <col width={27} />
                  {columns.slice(0, 5).map((c) => (
                    <col key={c.name} width={c.w} />
                  ))}
                </colgroup>
                <thead>
                  <tr>
                    <RowNumber scope="row">1</RowNumber>
                    {headings.map((h) => (
                      <HeadCell key={h} scope="col">{h}</HeadCell>
                    ))}
                  </tr>
                </thead>
                <tbody>
                  {tableRows.map((row, r) => (
                    <DataRow key={row[0]} $band={r % 2 === 1}>
                      <RowNumber scope="row" $active={r === 10}>{r + 2}</RowNumber>
                      {row.map((value, c) => (
                        <Cell key={c} $name={c === 0}>{value}</Cell>
                      ))}
                    </DataRow>
                  ))}
                </tbody>
              </DataTable>
              <Chart>
                <ChartTitle>通用面积折线图</ChartTitle>
                <Legend>
                  <LegendItem><Swatch $fill={color.tealDark} />一月</LegendItem>
                  <LegendItem><Swatch $fill={color.teal} />二月</LegendItem>
                  <LegendItem><Swatch $fill={color.tealLight} />三月</LegendItem>
                  <LegendItem>
                    <Icon w={25} h={13}>
                      <path d="M1 6.500h24" stroke={color.lime} strokeWidth="4" strokeLinecap="round" />
                      <circle cx="12" cy="6.500" r="4" fill="#fff" stroke={color.lime} strokeWidth="4" />
                    </Icon>
                    总计
                  </LegendItem>
                </Legend>
                <Plot>
                  <AreaLineChart />
                  <TotalPill>2112</TotalPill>
                </Plot>
              </Chart>
            </SheetBody>
          </SheetView>
          <VerticalScroll>
            <ScrollButton type="button" aria-label="向上滚动"><Arrow dir="up" size={7} /></ScrollButton>
            <ScrollTrack $vertical><ScrollThumb $vertical /></ScrollTrack>
            <ScrollButton type="button" aria-label="向下滚动"><Arrow size={7} /></ScrollButton>
          </VerticalScroll>
        </Workspace>

        <SheetBar>
          <SheetBarMain>
            <SheetBarButton type="button" aria-label="上一张工作表" $w={28}><Arrow dir="left" fill="#c6c6c6" size={7} /></SheetBarButton>
            <SheetBarButton type="button" aria-label="下一张工作表" $w={30}><Arrow dir="right" fill="#c6c6c6" size={7} /></SheetBarButton>
            <Grip $w={14} />
            <SheetTab type="button">sheet1</SheetTab>
            <SheetBarButton type="button" aria-label="新工作表" $w={82}><AddSheetIcon /></SheetBarButton>
            <HorizontalScroll>
              <Grip $w={2}><DotsIcon /></Grip>
              <Grip $w={14} />
              <ScrollButton type="button" aria-label="向左滚动"><Arrow dir="left" size={7} /></ScrollButton>
              <ScrollTrack><ScrollThumb /></ScrollTrack>
              <ScrollButton type="button" aria-label="向右滚动"><Arrow dir="right" size={7} /></ScrollButton>
            </HorizontalScroll>
          </SheetBarMain>
        </SheetBar>

        <StatusBar>
          <span>就绪</span>
          <ViewButtons>
            <ViewButton type="button" aria-label="普通" $active><NormalViewIcon /></ViewButton>
            <ViewButton type="button" aria-label="页面布局"><LayoutViewIcon /></ViewButton>
            <ViewButton type="button" aria-label="分页预览"><BreakViewIcon /></ViewButton>
          </ViewButtons>
          <ZoomBox>
            <SignIcon />
            <ZoomRange type="range" min={10} max={190} defaultValue={100} aria-label="缩放" />
            <SignIcon plus />
          </ZoomBox>
          <span>100%</span>
        </StatusBar>
      </AppWindow>
    </Page>
  );
}
